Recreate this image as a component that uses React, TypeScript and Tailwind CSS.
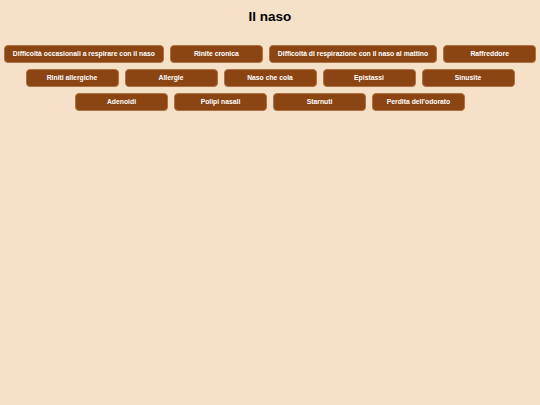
const rows: string[][] = [
  [
    "Difficoltà occasionali a respirare con il naso",
    "Rinite cronica",
    "Difficoltà di respirazione con il naso al mattino",
    "Raffreddore",
  ],
  ["Riniti allergiche", "Allergie", "Naso che cola", "Epistassi", "Sinusite"],
  ["Adenoidi", "Polipi nasali", "Starnuti", "Perdita dell'odorato"],
];

export default function App() {
  return (
    <div
      className="min-h-[405px] w-full bg-[#f5e1c8] text-black"
      style={{ fontFamily: '"Liberation Sans", Arial, sans-serif' }}
    >
      <h1 className="pt-[8px] text-center text-[13.5px] font-bold leading-[18px]">
        Il naso
      </h1>
      <div className="mt-[19px] flex flex-col items-center gap-[6px]">
        {rows.map((row, i) => (
          <div key={i} className="flex justify-center gap-[6px]">
            {row.map((t) => (
              <button
                key={t}
                className="h-[18px] min-w-[93px] whitespace-nowrap rounded-[4px] border border-[#b0703f] bg-[#8b4513] px-[8px] text-[6.8px] font-bold leading-none text-white"
              >
                {t}
              </button>
            ))}
          </div>
        ))}
      </div>
    </div>
  );
}
